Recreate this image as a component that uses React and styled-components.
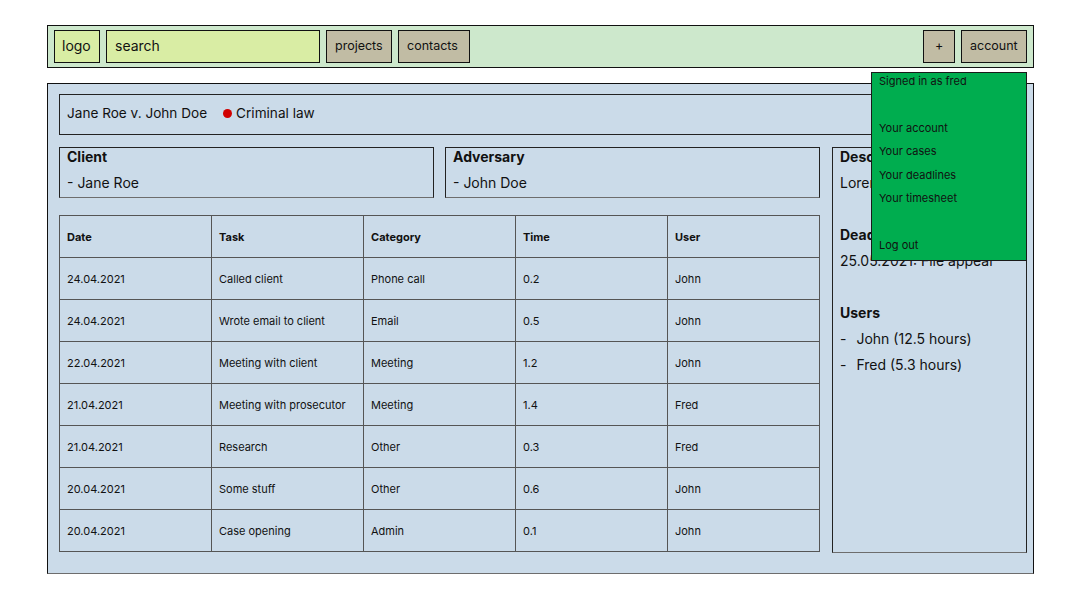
import React from 'react';
import styled, { createGlobalStyle } from 'styled-components';

const GlobalStyle = createGlobalStyle`
  * {
    box-sizing: border-box;
  }
  body {
    margin: 0;
    background: #ffffff;
    font-family: Inter, "Noto Sans", sans-serif;
    color: #111;
  }
`;

const Page = styled.div`
  padding: 25px 0 0 47px;
`;

const Header = styled.header`
  width: 987px;
  height: 43px;
  display: flex;
  align-items: center;
  gap: 6px;
  padding: 4px 6px;
  background-color: #cde8cc;
  border: 1px solid #111;
`;

const Boxed = styled.div`
  height: 33px;
  display: flex;
  align-items: center;
  border: 1px solid #111;
  background-color: ${(p) => (p.$khaki ? '#c1bca4' : '#d9eda4')};
  font-size: ${(p) => (p.$khaki ? '12.5px' : '14px')};
  padding: 0 ${(p) => p.$pad || 8}px 3px;
  width: ${(p) => (p.$w ? `${p.$w}px` : 'auto')};
  flex-shrink: 0;
`;

const Spacer = styled.div`
  flex: 1;
`;

const AccountWrap = styled.div`
  position: relative;
`;

const Dropdown = styled.div`
  position: absolute;
  top: calc(100% + 9px);
  right: 0;
  width: 156px;
  background-color: #00ad4f;
  border: 1px solid #1a1a1a;
  padding: 0 7px;
  z-index: 10;
`;

const MenuItem = styled.div`
  height: 23.4px;
  line-height: 16px;
  font-size: 11px;
  color: #111;
`;

const Main = styled.main`
  margin-top: 15px;
  width: 987px;
  height: 491px;
  display: flex;
  flex-direction: column;
  padding: 10px 6px 20px 11px;
  background-color: #cbdbe9;
  border: 1px solid #111;
  border-bottom-color: #6d6d6d;
`;

const TitleBox = styled.div`
  height: 41px;
  display: flex;
  align-items: center;
  padding: 0 7px 3px;
  border: 1px solid #222;
  font-size: 13.6px;
`;

const Dot = styled.span`
  width: 9px;
  height: 9px;
  border-radius: 50%;
  background-color: #d10000;
  margin: 1px 4px 0 16px;
`;

const Body = styled.div`
  margin-top: 12px;
  flex: 1;
  display: grid;
  grid-template-columns: 761px 195px;
  column-gap: 12px;
`;

const LeftColumn = styled.div`
  display: flex;
  flex-direction: column;
`;

const Parties = styled.div`
  height: 51px;
  display: grid;
  grid-template-columns: 1fr 1fr;
  gap: 11px;
`;

const Panel = styled.div`
  border: 1px solid #222;
  border-bottom-color: #6d6d6d;
  padding: 0 7px;
  font-size: 14px;
  overflow: hidden;
`;

const Line = styled.div`
  height: 26px;
  line-height: 18px;
  font-weight: ${(p) => (p.$bold ? 700 : 400)};
  white-space: nowrap;
`;

const Name = styled.span`
  margin-left: 10px;
`;

const Table = styled.table`
  margin-top: 17px;
  width: 761px;
  height: 337px;
  border-collapse: collapse;
  table-layout: fixed;
  font-size: 11px;
  border: 1px solid #444;
`;

const Cell = styled.td`
  height: 42px;
  padding: 0 7px;
  border: 1px solid #555;
  text-align: left;
  font-weight: ${(p) => (p.$head ? 700 : 400)};
`;

const rows = [
  ['24.04.2021', 'Called client', 'Phone call', '0.2', 'John'],
  ['24.04.2021', 'Wrote email to client', 'Email', '0.5', 'John'],
  ['22.04.2021', 'Meeting with client', 'Meeting', '1.2', 'John'],
  ['21.04.2021', 'Meeting with prosecutor', 'Meeting', '1.4', 'Fred'],
  ['21.04.2021', 'Research', 'Other', '0.3', 'Fred'],
  ['20.04.2021', 'Some stuff', 'Other', '0.6', 'John'],
  ['20.04.2021', 'Case opening', 'Admin', '0.1', 'John'],
];

const App = () => {
  return (
    <Page>
      <GlobalStyle />
      <Header>
        <Boxed $w={46} $pad={7}>logo</Boxed>
        <Boxed $w={214}>search</Boxed>
        <Boxed $khaki $w={66}>projects</Boxed>
        <Boxed $khaki $w={72}>contacts</Boxed>
        <Spacer />
        <Boxed $khaki $w={32} $pad={11}>+</Boxed>
        <AccountWrap>
          <Boxed $khaki $w={66}>account</Boxed>
          <Dropdown>
            <MenuItem>Signed in as fred</MenuItem>
            <MenuItem />
            <MenuItem>Your account</MenuItem>
            <MenuItem>Your cases</MenuItem>
            <MenuItem>Your deadlines</MenuItem>
            <MenuItem>Your timesheet</MenuItem>
            <MenuItem />
            <MenuItem>Log out</MenuItem>
          </Dropdown>
        </AccountWrap>
      </Header>

      <Main>
        <TitleBox>
          Jane Roe v. John Doe
          <Dot />
          Criminal law
        </TitleBox>

        <Body>
          <LeftColumn>
            <Parties>
              <Panel>
                <Line $bold>Client</Line>
                <Line>- Jane Roe</Line>
              </Panel>
              <Panel>
                <Line $bold>Adversary</Line>
                <Line>- John Doe</Line>
              </Panel>
            </Parties>

            <Table>
              <thead>
                <tr>
                  {['Date', 'Task', 'Category', 'Time', 'User'].map((h) => (
                    <Cell as="th" $head key={h}>
                      {h}
                    </Cell>
                  ))}
                </tr>
              </thead>
              <tbody>
                {rows.map((row, i) => (
                  <tr key={i}>
                    {row.map((c, j) => (
                      <Cell key={j}>{c}</Cell>
                    ))}
                  </tr>
                ))}
              </tbody>
            </Table>
          </LeftColumn>

          <Panel>
            <Line $bold>Description</Line>
            <Line>Lorem ipsum dolor sit amet</Line>
            <Line />
            <Line $bold>Deadlines</Line>
            <Line>25.05.2021: File appeal</Line>
            <Line />
            <Line $bold>Users</Line>
            <Line>
              -<Name>John (12.5 hours)</Name>
            </Line>
            <Line>
              -<Name>Fred (5.3 hours)</Name>
            </Line>
          </Panel>
        </Body>
      </Main>
    </Page>
  );
};

export default App;
